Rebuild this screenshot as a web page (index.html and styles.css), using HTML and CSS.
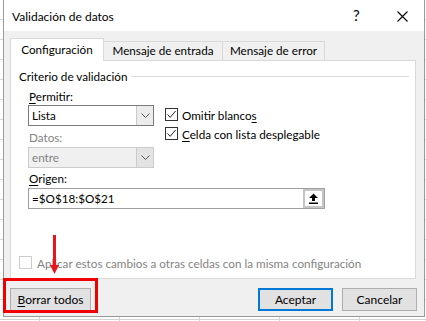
FILE: index.html
```html
<!DOCTYPE html>
<html lang="es">
<head>
<meta charset="utf-8">
<title>Validación de datos</title>
<link rel="stylesheet" href="styles.css">
</head>
<body>
<div class="dialog">
  <div class="titlebar">
    <span class="title">Validación de datos</span>
    <span class="help">?</span>
    <span class="close"><svg width="11" height="11" viewBox="0 0 11 11"><path d="M0.5 0.5 L10.5 10.5 M10.5 0.5 L0.5 10.5" stroke="#000" stroke-width="1.1" fill="none"/></svg></span>
  </div>
  <div class="dialog-body">
    <div class="tabs">
      <div class="tab active">Configuración</div>
      <div class="tab t2">Mensaje de entrada</div>
      <div class="tab t3">Mensaje de error</div>
    </div>
    <div class="panel">
      <div class="group-head"><span>Criterio de validación</span><span class="rule"></span></div>
      <div class="criteria">
        <div class="col-left">
          <div class="label"><u>P</u>ermitir:</div>
          <div class="select">
            <span class="val">Lista</span>
            <span class="drop"><svg width="9" height="5" viewBox="0 0 9 5"><path d="M0.5 0.5 L4.5 4.5 L8.5 0.5" stroke="#555" fill="none"/></svg></span>
          </div>
          <div class="label disabled gap-datos">Datos:</div>
          <div class="select off">
            <span class="val">entre</span>
            <span class="drop"><svg width="9" height="5" viewBox="0 0 9 5"><path d="M0.5 0.5 L4.5 4.5 L8.5 0.5" stroke="#555" fill="none"/></svg></span>
          </div>
        </div>
        <div class="col-right">
          <div class="check"><span class="box"><svg width="11" height="11" viewBox="0 0 11 11"><path d="M1.5 5.5 L4.2 8.3 L9.6 2" stroke="#222" stroke-width="1" fill="none"/></svg></span><span>Omitir blanco<u>s</u></span></div>
          <div class="check"><span class="box"><svg width="11" height="11" viewBox="0 0 11 11"><path d="M1.5 5.5 L4.2 8.3 L9.6 2" stroke="#222" stroke-width="1" fill="none"/></svg></span><span><u>C</u>elda con lista desplegable</span></div>
        </div>
      </div>
      <div class="label origen"><u>O</u>rigen:</div>
      <div class="ref-input">
        <span class="ref-val">=$O$18:$O$21</span>
        <span class="ref-btn"><svg width="11" height="11" viewBox="0 0 11 11"><path d="M5.5 0.5 L10 5 L7 5 L7 8 L4 8 L4 5 L1 5 Z" fill="#000"/><rect x="1" y="9.5" width="9" height="1.5" fill="#000"/></svg></span>
      </div>
      <div class="apply"><span class="box off"></span><span>Aplicar estos cambios a otras celdas con la misma configuración</span></div>
    </div>
    <div class="buttons">
      <button class="btn clear"><u>B</u>orrar todos</button>
      <span class="spacer"></span>
      <button class="btn primary">Aceptar</button>
      <button class="btn">Cancelar</button>
    </div>
  </div>
  <div class="annot-box"></div>
  <svg class="annot-arrow" width="14" height="42" viewBox="0 0 14 42"><rect x="5" y="0" width="3" height="32" fill="#e8151b"/><path d="M2 30 L11 30 L6.5 39 Z" fill="#e8151b"/></svg>
</div>
</body>
</html>
```

FILE: styles.css
```css
* { box-sizing: border-box; }

body {
  margin: 0;
  width: 426px;
  height: 321px;
  overflow: hidden;
  font-family: Lato, "Noto Sans", sans-serif;
  font-size: 11.7px;
  color: #000;
  background-color: #fff;
  background-image:
    linear-gradient(to right, #d4d4d4 1px, transparent 1px),
    linear-gradient(to bottom, #d4d4d4 1px, transparent 1px);
  background-size: 80px 100%, 100% 20px;
  background-position: 39px 0, 0 19px;
}

.dialog {
  position: relative;
  margin-left: 3px;
  width: 422px;
  height: 317px;
  border: 1px solid #9a9a9a;
  border-top: none;
  background: #f0f0f0;
  display: flex;
  flex-direction: column;
}

.titlebar {
  height: 31px;
  background: #fff;
  display: flex;
  align-items: center;
  padding-left: 8px;
  padding-top: 1px;
  font-size: 12px;
}
.title { flex: 1; }
.help {
  font-size: 15px;
  width: 44px;
  text-align: left;
  margin-top: -2px;
}
.close {
  width: 27px;
  height: 12px;
  display: flex;
  align-items: center;
}

.dialog-body {
  flex: 1;
  padding: 7px 7px 0 6px;
  display: flex;
  flex-direction: column;
}

.tabs {
  display: flex;
  align-items: flex-end;
  height: 22px;
}
.tab {
  height: 19px;
  border: 1px solid #d9d9d9;
  border-bottom: none;
  background: #f0f0f0;
  text-align: center;
  line-height: 17px;
  white-space: nowrap;
}
.tab.active {
  width: 94px;
  height: 23px;
  margin-bottom: -1px;
  background: #fff;
  position: relative;
  z-index: 1;
  line-height: 21px;
}
.tab.t2 { width: 119px; border-left: none; }
.tab.t3 { width: 102px; border-left: none; }

.panel {
  width: 406px;
  height: 219px;
  background: #fff;
  border: 1px solid #d9d9d9;
  padding: 0 6px 8px 8px;
  display: flex;
  flex-direction: column;
}

.group-head {
  margin-top: 8px;
  height: 15px;
  line-height: 15px;
  display: flex;
  align-items: center;
}
.group-head .rule {
  flex: 1;
  margin-left: 4px;
  border-top: 1px solid #dcdcdc;
}

.criteria {
  display: flex;
  margin-top: 5px;
  padding-left: 9px;
}
.col-left { width: 126px; }
.col-right {
  margin-left: 11px;
  padding-top: 16px;
}

.label {
  height: 15px;
  line-height: 15px;
  padding-left: 1px;
}
.label u, .check u, .btn u { text-decoration-thickness: 1px; text-underline-offset: 2px; }
.disabled { color: #838383; }
.gap-datos { margin-top: 4px; margin-bottom: 2px; }

.select {
  margin-top: 1px;
  height: 21px;
  border: 1px solid #7a7a7a;
  background: #fff;
  display: flex;
  align-items: stretch;
}
.select .val {
  flex: 1;
  line-height: 19px;
  padding-left: 3px;
}
.select .drop {
  width: 17px;
  border-left: 1px solid #c8c8c8;
  background: #ececec;
  display: flex;
  align-items: center;
  justify-content: center;
}
.select.off {
  margin-top: 0;
  border-color: #cccccc;
  background: #f0f0f0;
  color: #838383;
}
.select.off .drop { background: #e3e3e3; border-left-color: #cccccc; }

.check {
  height: 19px;
  display: flex;
  align-items: center;
}
.box {
  width: 13px;
  height: 13px;
  border: 1px solid #333;
  background: #fff;
  margin-right: 4px;
  display: flex;
  align-items: center;
  justify-content: center;
}

.origen { margin-top: 3px; margin-left: 9px; }

.ref-input {
  margin-top: 2px;
  margin-left: 9px;
  width: 297px;
  height: 21px;
  border: 1px solid #a0a0a0;
  display: flex;
  align-items: stretch;
}
.ref-val {
  flex: 1;
  line-height: 19px;
  padding-left: 3px;
}
.ref-btn {
  width: 21px;
  border: 2px solid #c4c4c4;
  background: #fff;
  display: flex;
  align-items: center;
  justify-content: center;
}

.apply {
  margin-top: auto;
  height: 15px;
  display: flex;
  align-items: center;
  color: #838383;
}
.box.off {
  border-color: #cccccc;
  margin-right: 5px;
}

.buttons {
  margin-top: 9px;
  display: flex;
  gap: 9px;
}
.spacer { flex: 1; }
.btn {
  height: 23px;
  width: 75px;
  border: 1px solid #adadad;
  background: #e1e1e1;
  font-family: inherit;
  font-size: 12px;
  color: #000;
  padding: 0;
  line-height: 20px;
}
.btn.clear { width: 81px; }
.btn.primary { border: 2px solid #0078d7; }

.annot-box {
  position: absolute;
  left: -1px;
  top: 278px;
  width: 95px;
  height: 35px;
  border: 3px solid #f00000;
}
.annot-arrow {
  position: absolute;
  left: 44px;
  top: 235px;
}
```
